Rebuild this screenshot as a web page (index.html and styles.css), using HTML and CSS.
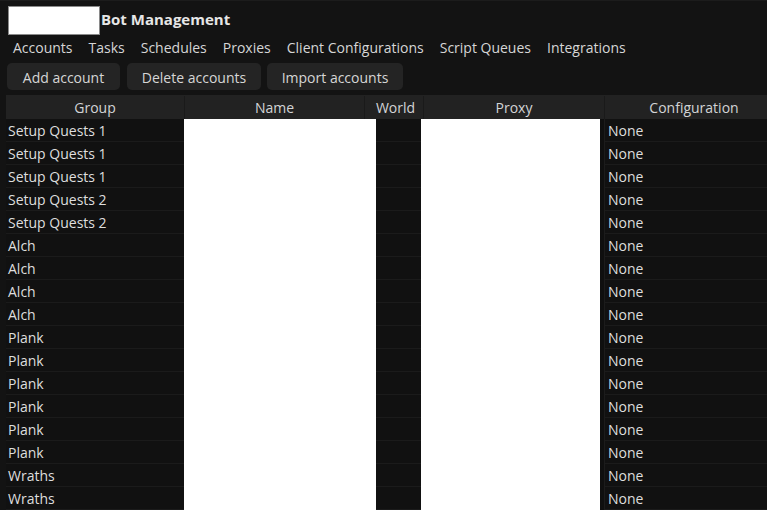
FILE: index.html
```html
<!DOCTYPE html>
<html>
<head>
<meta charset="utf-8">
<link rel="stylesheet" href="styles.css">
</head>
<body>
<div class="app">
  <header class="titlebar">
    <div class="logo-box"></div>
    <h1 class="title">Bot Management</h1>
  </header>
  <nav class="nav">
    <a class="nav-item">Accounts</a>
    <a class="nav-item">Tasks</a>
    <a class="nav-item">Schedules</a>
    <a class="nav-item">Proxies</a>
    <a class="nav-item">Client Configurations</a>
    <a class="nav-item">Script Queues</a>
    <a class="nav-item">Integrations</a>
  </nav>
  <div class="toolbar">
    <button class="btn btn-add">Add account</button>
    <button class="btn btn-del">Delete accounts</button>
    <button class="btn btn-imp">Import accounts</button>
  </div>
  <div class="table">
    <div class="thead">
      <div class="th th-group">Group</div>
      <div class="th th-name">Name</div>
      <div class="th th-world">World</div>
      <div class="th th-proxy">Proxy</div>
      <div class="th th-config">Configuration</div>
    </div>
    <div class="tbody">
      <div class="col col-group">
        <div class="cell">Setup Quests 1</div>
        <div class="cell">Setup Quests 1</div>
        <div class="cell">Setup Quests 1</div>
        <div class="cell">Setup Quests 2</div>
        <div class="cell">Setup Quests 2</div>
        <div class="cell">Alch</div>
        <div class="cell">Alch</div>
        <div class="cell">Alch</div>
        <div class="cell">Alch</div>
        <div class="cell">Plank</div>
        <div class="cell">Plank</div>
        <div class="cell">Plank</div>
        <div class="cell">Plank</div>
        <div class="cell">Plank</div>
        <div class="cell">Plank</div>
        <div class="cell">Wraths</div>
        <div class="cell">Wraths</div>
      </div>
      <div class="col col-name redacted"></div>
      <div class="col col-world">
        <div class="cell"></div><div class="cell"></div><div class="cell"></div><div class="cell"></div>
        <div class="cell"></div><div class="cell"></div><div class="cell"></div><div class="cell"></div>
        <div class="cell"></div><div class="cell"></div><div class="cell"></div><div class="cell"></div>
        <div class="cell"></div><div class="cell"></div><div class="cell"></div><div class="cell"></div>
        <div class="cell"></div>
      </div>
      <div class="col col-proxy redacted"></div>
      <div class="col col-gap"></div>
      <div class="col col-config">
        <div class="cell">None</div>
        <div class="cell">None</div>
        <div class="cell">None</div>
        <div class="cell">None</div>
        <div class="cell">None</div>
        <div class="cell">None</div>
        <div class="cell">None</div>
        <div class="cell">None</div>
        <div class="cell">None</div>
        <div class="cell">None</div>
        <div class="cell">None</div>
        <div class="cell">None</div>
        <div class="cell">None</div>
        <div class="cell">None</div>
        <div class="cell">None</div>
        <div class="cell">None</div>
        <div class="cell">None</div>
      </div>
    </div>
  </div>
</div>
</body>
</html>
```
FILE: styles.css
```css
html, body {
  margin: 0;
  padding: 0;
  background: #131313;
  height: 100%;
  overflow: hidden;
}
.app {
  font-family: "Open Sans", "Noto Sans", sans-serif;
  color: #dcdcdc;
  border-top: 1px solid #1c1c1c;
  height: 100%;
}
.titlebar {
  display: flex;
  align-items: center;
  padding: 5px 0 0 8px;
  height: 30px;
}
.logo-box {
  width: 92px;
  height: 29px;
  box-sizing: border-box;
  background: #ffffff;
  border: 1px solid #8a8a8a;
  align-self: flex-start;
}
.title {
  margin: 0 0 0 1px;
  font-size: 15px;
  font-weight: 700;
  color: #e6e6e6;
  line-height: 20px;
  align-self: flex-start;
  padding-top: 3px;
}
.nav {
  display: flex;
  gap: 16px;
  padding: 0 0 0 13px;
  height: 23px;
  align-items: center;
  font-size: 14px;
}
.nav-item {
  color: #d6d6d6;
}
.toolbar {
  display: flex;
  gap: 7px;
  padding: 4px 0 0 7px;
  height: 27px;
}
.btn {
  height: 27px;
  border: none;
  border-radius: 5px;
  background: #242424;
  color: #d6d6d6;
  font-family: inherit;
  font-size: 14px;
  padding: 1px 0 0;
}
.btn-add { width: 113px; }
.btn-del { width: 134px; }
.btn-imp { width: 136px; margin-left: -1px; }
.table {
  margin: 5px 0 0 6px;
}
.thead {
  display: flex;
  height: 23px;
  background: #222222;
  font-size: 14px;
  padding-top: 1px;
}
.th {
  display: flex;
  align-items: center;
  justify-content: center;
  color: #d2d4d6;
  border-right: 1px solid #1a1a1a;
  box-sizing: border-box;
}
.th-group { width: 179px; }
.th-name { width: 180px; }
.th-world { width: 59px; padding-left: 3px; }
.th-proxy { width: 181px; }
.th-config { flex: 1; border-right: none; padding-left: 16px; }
.tbody {
  display: flex;
  font-size: 14px;
}
.col {
  display: flex;
  flex-direction: column;
  min-height: 400px;
}
.col-group { width: 178px; background: #111111; }
.col-name { width: 192px; }
.col-world { width: 45px; background: #111111; }
.col-proxy { width: 179px; }
.col-gap { width: 4px; background: #0f0f0f; border-right: 1px solid #1c1c1c; }
.col-config { flex: 1; background: #111111; }
.redacted {
  background: #ffffff;
}
.cell {
  height: 23px;
  box-sizing: border-box;
  border-bottom: 1px solid #1b1b1b;
  display: flex;
  align-items: center;
  padding: 1px 0 0 2px;
  color: #dedede;
  white-space: nowrap;
}
.col-config .cell { padding-left: 3px; }
```
